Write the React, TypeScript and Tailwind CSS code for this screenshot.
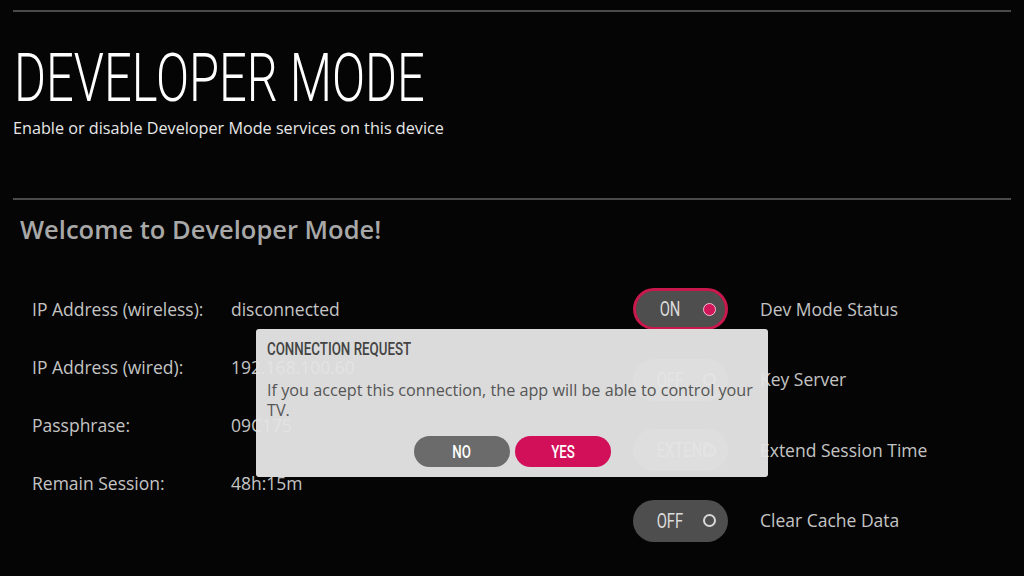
import React from 'react';

// no condensed face installed, so narrow Roboto by hand
const cond = 'inline-block [font-family:Roboto,sans-serif] scale-x-[0.74]';

function Toggle({ label, on, active }: { label: string; on?: boolean; active?: boolean }) {
  return (
    <div
      className={`flex h-[42px] w-[95px] items-center rounded-full border-[3px] bg-[#4e4e4e] pl-[11px] ${
        active ? 'border-[#c8184d]' : 'border-transparent'
      }`}
    >
      <span className="w-[46px] text-center">
        <span className={`${cond} origin-center text-[20px] text-[#dcdcdc]`}>{label}</span>
      </span>
      {on ? (
        <span className="ml-[10px] h-[13px] w-[13px] rounded-full border border-[#f3c0cf] bg-[#d2165a]" />
      ) : (
        <span className="ml-[10px] h-[13px] w-[13px] rounded-full border-2 border-[#d8d8d8]" />
      )}
    </div>
  );
}

export default function App() {
  const info = [
    ['IP Address (wireless):', 'disconnected'],
    ['IP Address (wired):', '192.168.100.60'],
    ['Passphrase:', '09C175'],
    ['Remain Session:', '48h:15m'],
  ];
  const toggles = [
    { label: 'ON', on: true, active: true, text: 'Dev Mode Status' },
    { label: 'OFF', text: 'Key Server' },
    { label: 'EXTEND', text: 'Extend Session Time' },
    { label: 'OFF', text: 'Clear Cache Data' },
  ];

  return (
    <div className="relative h-[576px] w-[1024px] overflow-hidden bg-[#050505] [font-family:'Open_Sans',sans-serif]">
      <div className="px-[13px] pt-[10px]">
        <div className="h-[2px] w-[998px] bg-[#4a4a4a]" />
        <h1 className="mt-[30px] pl-[1px] text-[66px] font-light leading-none text-white">
          <span className={`${cond} origin-left`}>DEVELOPER MODE</span>
        </h1>
        <p className="mt-[5px] text-[16.2px] leading-[22px] text-[#e8e8e8]">
          Enable or disable Developer Mode services on this device
        </p>
        <div className="mt-[59px] h-[2px] w-[998px] bg-[#4a4a4a]" />
        <h2 className="mt-[14px] pl-[7px] text-[25.5px] font-semibold leading-[30px] text-[#a8a8a8]">
          Welcome to Developer Mode!
        </h2>
      </div>

      <div className="mt-[53px] flex">
        <div className="flex w-[600px] flex-col gap-[34px] pl-[32px]">
          {info.map(([k, v]) => (
            <div key={k} className="flex h-[24px] items-center text-[17.5px] text-[#c4c4c4]">
              <span className="w-[199px]">{k}</span>
              <span>{v}</span>
            </div>
          ))}
        </div>
        <div className="-mt-[9px] flex flex-col gap-[28.5px] pl-[33px]">
          {toggles.map((t) => (
            <div key={t.text} className="flex items-center">
              <Toggle label={t.label} on={t.on} active={t.active} />
              <span className="ml-[32px] text-[17.5px] text-[#c4c4c4]">{t.text}</span>
            </div>
          ))}
        </div>
      </div>

      {/* connection request dialog */}
      <div className="absolute left-[256px] top-[329px] h-[148px] w-[512px] rounded-[3px] bg-[#e4e4e4]/[0.96] px-[11px] pt-[9px]">
        <div className="h-[20px] text-[18px] font-medium leading-[20px] text-[#444]">
          <span className={`${cond} origin-left`}>CONNECTION REQUEST</span>
        </div>
        <p className="mt-[22px] text-[16.2px] leading-[20px] text-[#555]">
          If you accept this connection, the app will be able to control your TV.
        </p>
        <div className="mt-[16px] flex justify-center gap-[5px] pl-[1px]">
          <button className="h-[31px] w-[96px] rounded-full bg-[#6b6b6b] text-[18px] text-white">
            <span className={`${cond} origin-center font-medium`}>NO</span>
          </button>
          <button className="h-[31px] w-[96px] rounded-full bg-[#d2105a] text-[18px] text-white">
            <span className={`${cond} origin-center font-medium`}>YES</span>
          </button>
        </div>
      </div>
    </div>
  );
}
